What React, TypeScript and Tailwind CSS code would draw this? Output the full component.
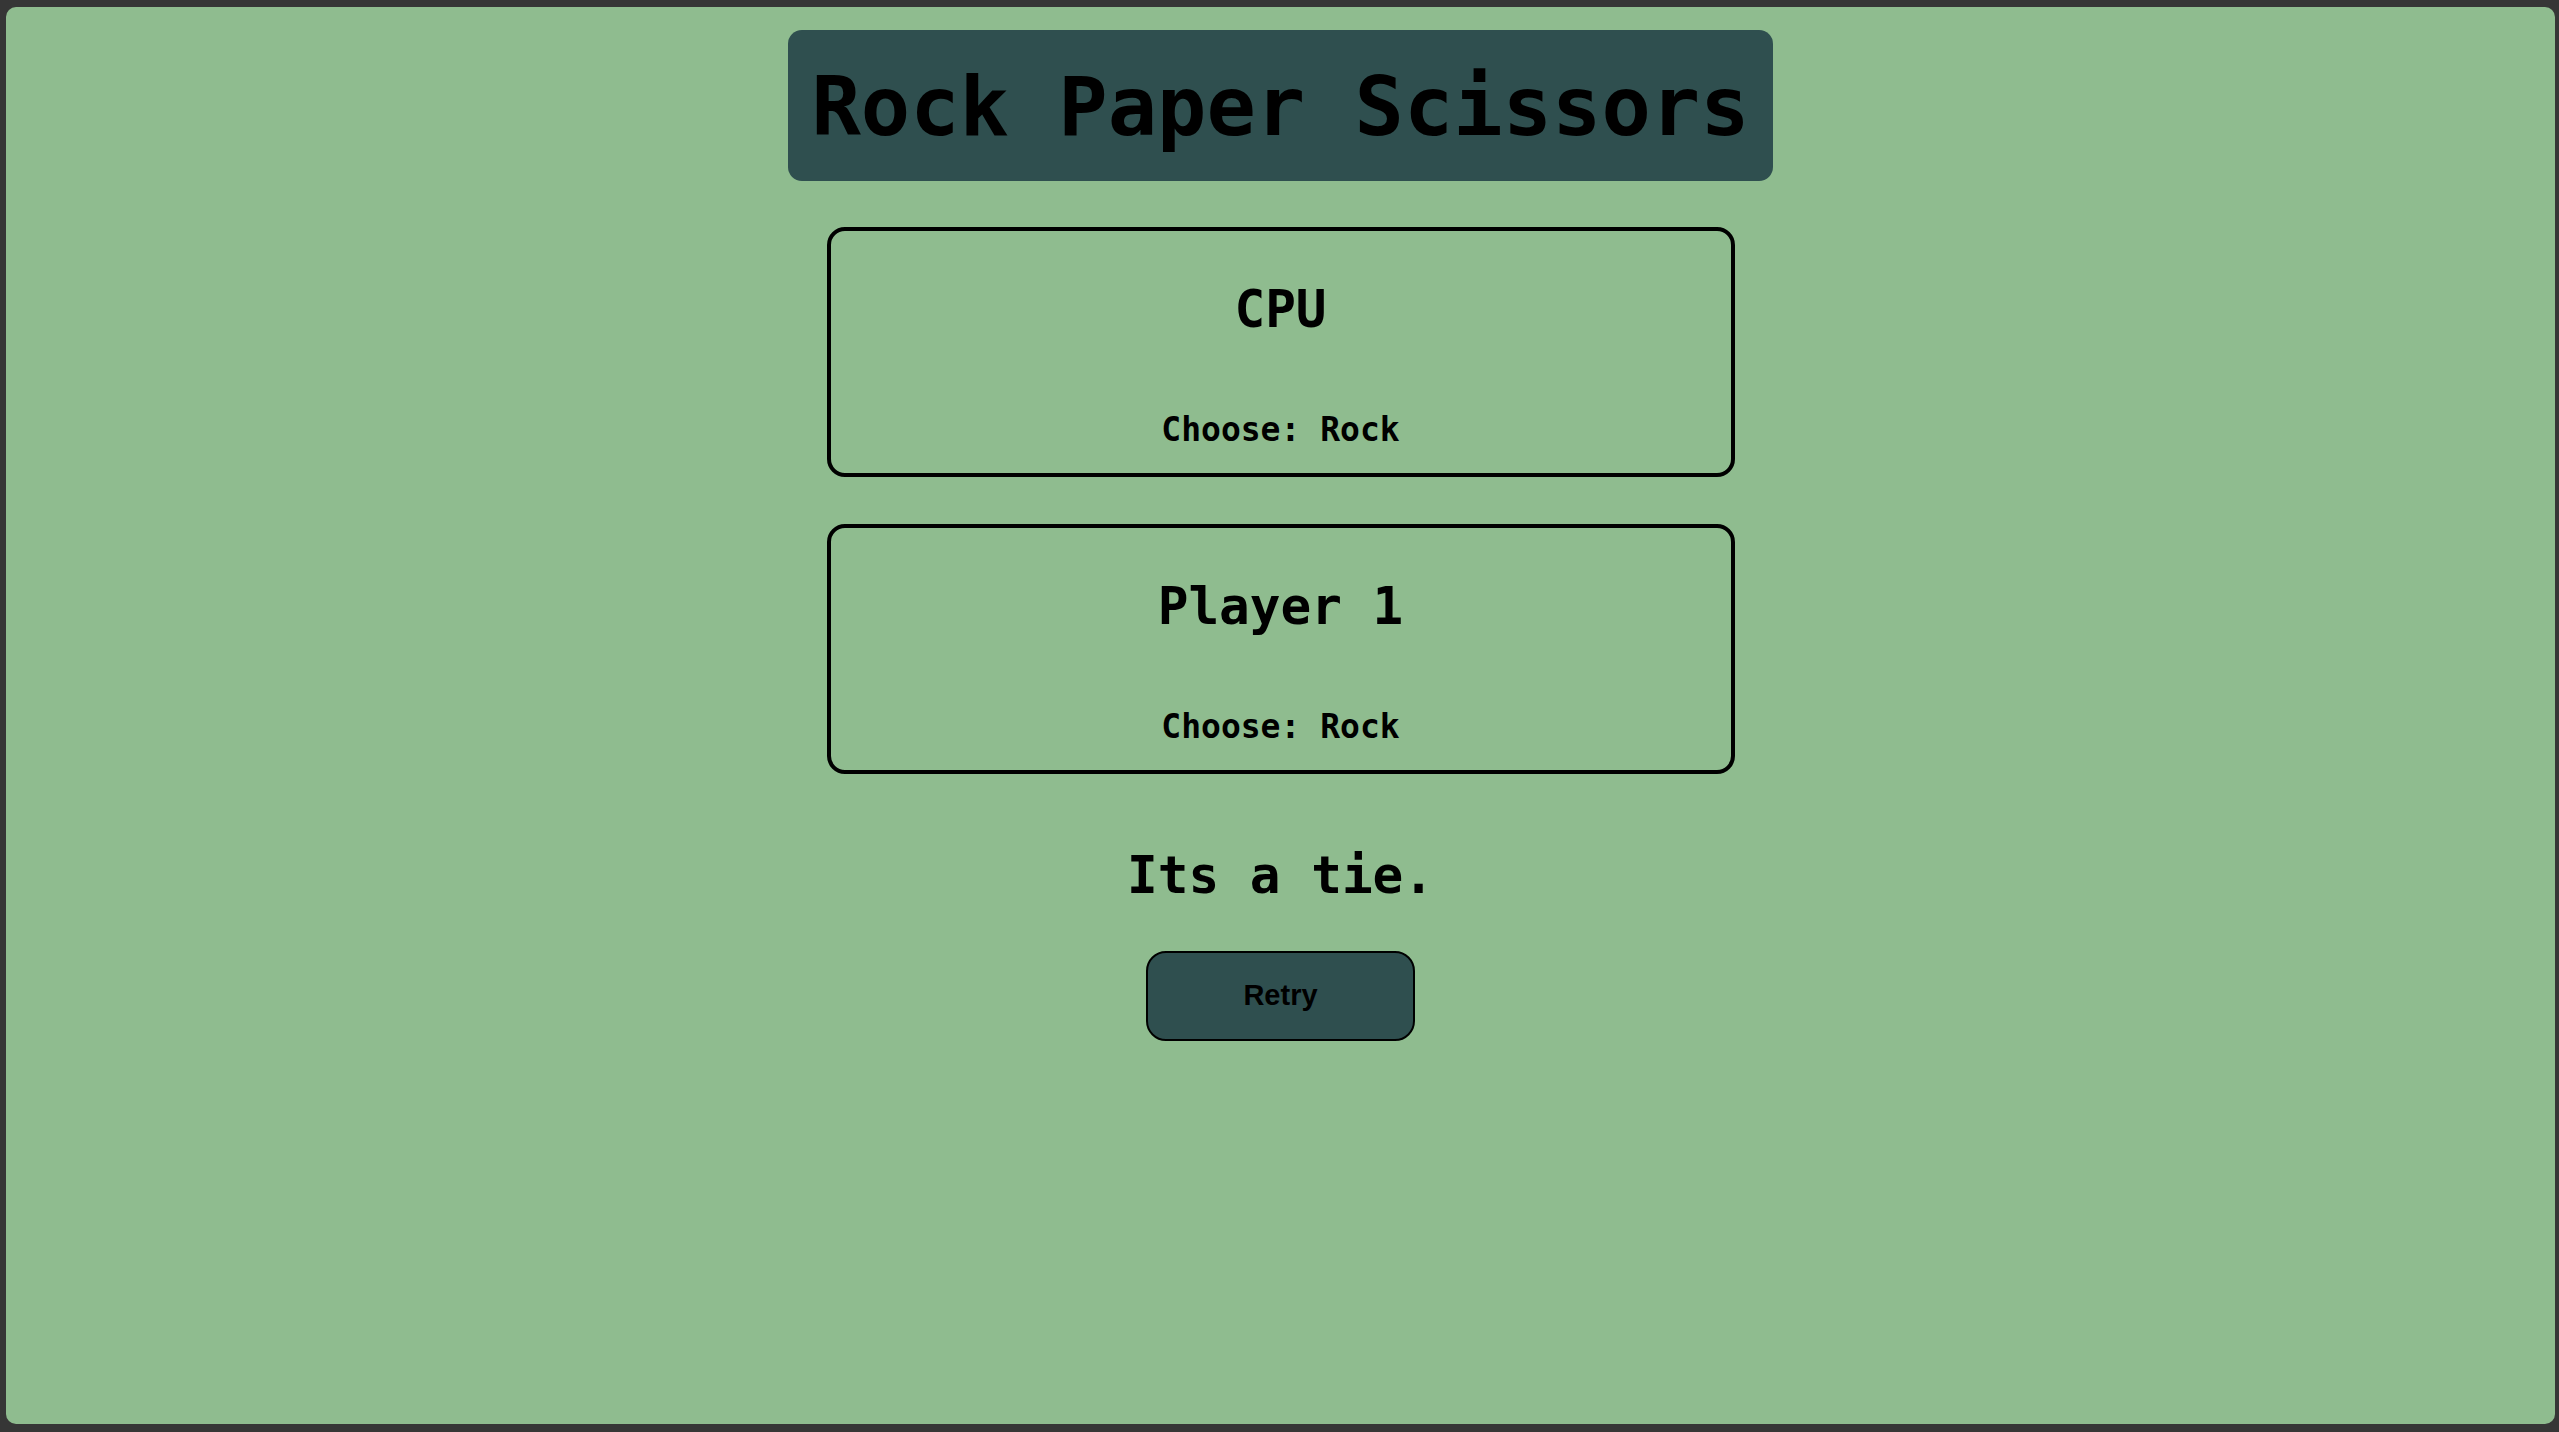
const mono = "font-['DejaVu_Sans_Mono',monospace]";

function PlayerCard({ name, choice }: { name: string; choice: string }) {
  return (
    <div className="w-[908px] h-[250px] border-[4px] border-black rounded-[18px] flex flex-col items-center pt-[53px]">
      <h2 className={`${mono} text-[51px] leading-none font-bold text-black`}>{name}</h2>
      <p className={`${mono} text-[33px] leading-none font-bold text-black mt-[78px]`}>
        Choose: {choice}
      </p>
    </div>
  );
}

export default function App() {
  return (
    <div className="w-full h-[1432px] bg-[#363636] pt-[7px] pl-[6px] pr-[4px] pb-[8px]">
      <div className="h-full bg-[#8fbc8f] rounded-[10px] flex flex-col items-center">
        <div className="mt-[23px] w-[985px] h-[151px] rounded-[14px] bg-[#2f4f4f] flex justify-center pt-[36px]">
          <h1 className={`${mono} text-[82px] leading-none font-bold text-black whitespace-nowrap`}>
            Rock Paper Scissors
          </h1>
        </div>

        <div className="mt-[46px]">
          <PlayerCard name="CPU" choice="Rock" />
        </div>
        <div className="mt-[47px]">
          <PlayerCard name="Player 1" choice="Rock" />
        </div>

        <p className={`${mono} text-[51px] leading-none font-bold text-black mt-[76px]`}>Its a tie.</p>

        <button className="mt-[50px] w-[269px] h-[90px] border-2 border-black rounded-[20px] bg-[#2f4f4f] font-['Liberation_Sans',Arial,sans-serif] text-[29px] font-bold text-black">
          Retry
        </button>
      </div>
    </div>
  );
}
